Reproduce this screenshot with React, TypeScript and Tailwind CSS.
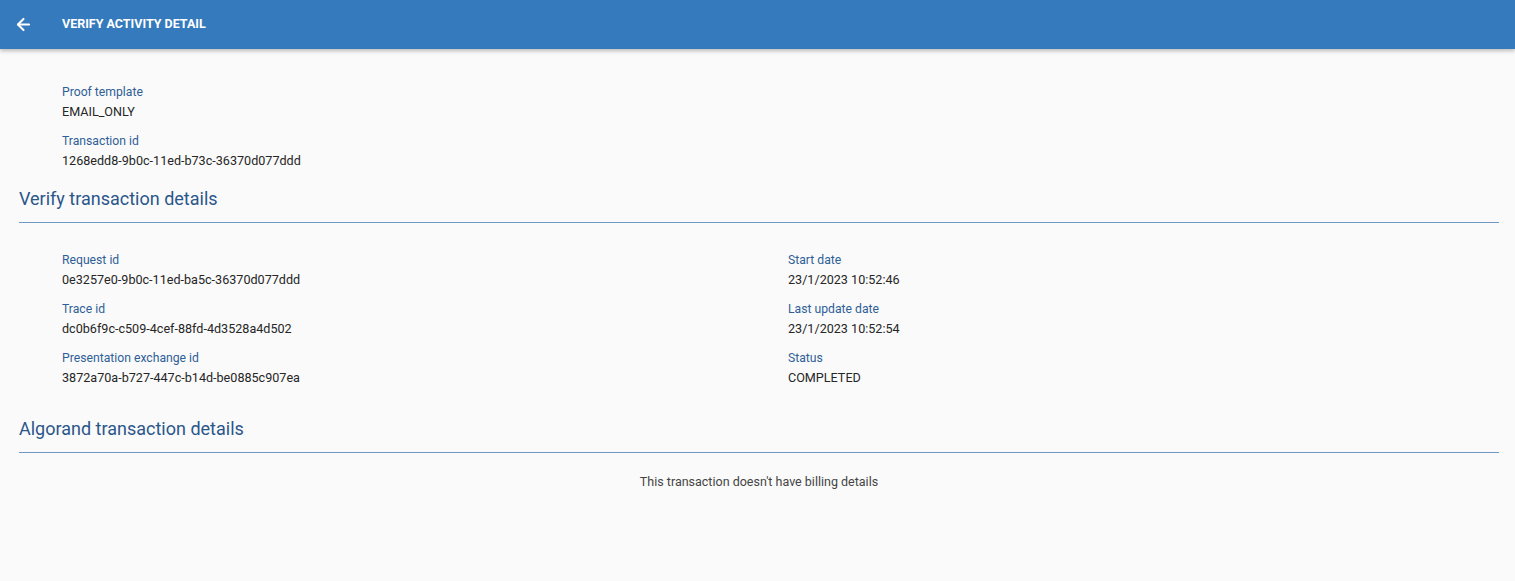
import React from 'react';
import { ArrowLeft } from 'lucide-react';

interface FieldProps {
  label: string;
  value: string;
}

const Field: React.FC<FieldProps> = ({ label, value }) => (
  <div className="mb-[9px]">
    <div className="text-[12.2px] leading-[20px] text-[#2f5f97]">{label}</div>
    <div className="text-[12.6px] leading-[20px] text-[#262626]">{value}</div>
  </div>
);

const SectionTitle: React.FC<{ title: string }> = ({ title }) => (
  <div className="border-b border-[#6f98c3] pb-[12px]">
    <h2 className="text-[18px] leading-[22px] text-[#2b568a]">{title}</h2>
  </div>
);

export default function App() {
  return (
    <div className="min-h-[581px] bg-[#fafafa] font-['Roboto','Liberation_Sans',sans-serif]">
      <header className="h-[49px] bg-[#357abd] flex items-center shadow-[0_2px_4px_rgba(0,0,0,0.25)]">
        <button className="w-[45px] flex justify-center text-white pl-[1px]">
          <ArrowLeft className="h-[19px] w-[19px]" strokeWidth={2.6} />
        </button>
        <h1 className="ml-[17px] text-[12.5px] font-bold text-white">VERIFY ACTIVITY DETAIL</h1>
      </header>

      <main className="pl-[19px] pr-[16px] pt-[33px]">
        <div className="pl-[43px]">
          <Field label="Proof template" value="EMAIL_ONLY" />
          <Field label="Transaction id" value="1268edd8-9b0c-11ed-b73c-36370d077ddd" />
        </div>

        <div className="pt-[8px]">
          <SectionTitle title="Verify transaction details" />
        </div>

        <div className="pl-[43px] pt-[27px] grid grid-cols-[726px_1fr]">
          <div>
            <Field label="Request id" value="0e3257e0-9b0c-11ed-ba5c-36370d077ddd" />
            <Field label="Trace id" value="dc0b6f9c-c509-4cef-88fd-4d3528a4d502" />
            <Field label="Presentation exchange id" value="3872a70a-b727-447c-b14d-be0885c907ea" />
          </div>
          <div>
            <Field label="Start date" value="23/1/2023 10:52:46" />
            <Field label="Last update date" value="23/1/2023 10:52:54" />
            <Field label="Status" value="COMPLETED" />
          </div>
        </div>

        <div className="pt-[21px]">
          <SectionTitle title="Algorand transaction details" />
        </div>

        <p className="text-center text-[12.5px] leading-[20px] text-[#444] pt-[19px]">
          This transaction doesn't have billing details
        </p>
      </main>
    </div>
  );
}
